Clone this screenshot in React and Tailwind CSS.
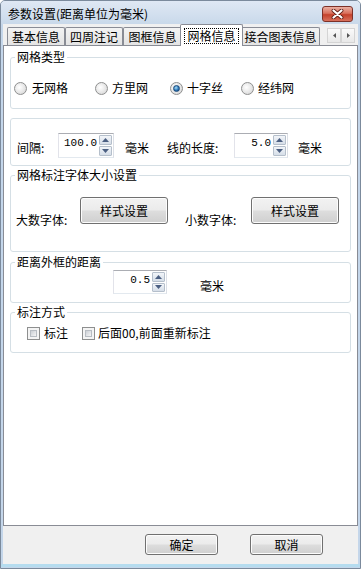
import React from "react";

const tabs = ["基本信息", "四周注记", "图框信息", "网格信息", "接合图表信息"];

function Tab({ label, active, w }) {
  if (active) {
    return (
      <div
        className={`relative z-10 ${w} h-[22px] -mx-[2px] -mb-px flex items-start justify-center pt-[3px] bg-white border border-b-0 border-[#898c95] rounded-t-[2px]`}
      >
        <span className="px-[2px] leading-[14px] border border-dotted border-black">{label}</span>
      </div>
    );
  }
  return (
    <div
      className={`${w} h-[18px] flex items-center justify-center bg-[linear-gradient(#f3f3f3,#e4e4e4)] border border-b-0 border-[#898c95] rounded-t-[2px]`}
    >
      <span className="leading-[14px]">{label}</span>
    </div>
  );
}

function Radio({ checked }) {
  return (
    <div className="w-[13px] h-[13px] rounded-full border border-[#8e8f8f] bg-[radial-gradient(circle_at_40%_40%,#ffffff,#e4e4e4_60%,#c9c9c9)] flex items-center justify-center shrink-0">
      {checked && (
        <div className="w-[7px] h-[7px] rounded-full bg-[radial-gradient(circle_at_40%_35%,#a8e0fa,#2d77b8_55%,#0e3c6e)] border border-[#1b4a7a]" />
      )}
    </div>
  );
}

function Check() {
  return (
    <div className="w-[13px] h-[13px] border border-[#8e8f8f] bg-[#f4f4f4] p-[2px] shrink-0">
      <div className="w-full h-full border border-[#b8bdc3] bg-[linear-gradient(135deg,#cbcfd5,#f5f5f5)]" />
    </div>
  );
}

function SpinBox({ value, w, h }) {
  return (
    <div className={`flex ${w} ${h} border border-[#abadb3] border-l-[#e2e3ea] border-r-[#dbdfe6] border-b-[#e3e9ef] bg-white shrink-0`}>
      <div className="flex-1 text-right pr-[2px] pt-[2px] font-['Liberation_Mono',monospace] text-[11px] leading-[14px] text-black">
        {value}
      </div>
      <div className="flex flex-col w-[13px] my-[1px] mr-[1px] gap-[1px]">
        <div className="flex-1 flex items-center justify-center border border-[#b5bfcb] bg-[linear-gradient(#f2f5f9,#d6dee8)] rounded-[1px]">
          <svg width="7" height="4" viewBox="0 0 7 4">
            <path d="M0 4 L3.5 0 L7 4Z" fill="#4b5f82" />
          </svg>
        </div>
        <div className="flex-1 flex items-center justify-center border border-[#b5bfcb] bg-[linear-gradient(#f2f5f9,#d6dee8)] rounded-[1px]">
          <svg width="7" height="4" viewBox="0 0 7 4">
            <path d="M0 0 L3.5 4 L7 0Z" fill="#4b5f82" />
          </svg>
        </div>
      </div>
    </div>
  );
}

function PushButton({ label, w, h }) {
  return (
    <div
      className={`${w} ${h} flex items-center justify-center rounded-[3px] border border-[#707070] bg-[linear-gradient(#f2f2f2_0%,#ebebeb_48%,#dddddd_52%,#cfcfcf_100%)] shadow-[inset_0_0_0_1px_#fcfcfc]`}
    >
      <span className="leading-[14px]">{label}</span>
    </div>
  );
}

function Group({ title, className, children }) {
  return (
    <fieldset className={`mx-[6px] border border-[#d5dfe5] rounded-[3px] ${className}`}>
      <legend className="ml-[4px] px-[2px] leading-[14px]">{title}</legend>
      {children}
    </fieldset>
  );
}

export default function App() {
  return (
    <div className="w-[361px] h-[569px] flex flex-col bg-[#c4d6ea] border border-[#7b8a9c] rounded-t-[5px] overflow-hidden text-[12px] text-black font-['Noto_Sans_CJK_SC','Noto_Sans',sans-serif]">
      {/* title bar */}
      <div className="h-[23px] flex items-center pl-[7px] pr-[7px] bg-[linear-gradient(#dfe8f4,#c9d9ea)]">
        <span className="leading-[14px] pt-[2px]">参数设置(距离单位为毫米)</span>
        <div className="ml-auto mt-[2px] w-[31px] h-[16px] rounded-[3px] border border-[#7d3128] bg-[linear-gradient(#eab0a3_0%,#d9705c_45%,#c4412b_55%,#d8705c_100%)] flex items-center justify-center">
          <svg width="13" height="10" viewBox="0 0 13 10">
            <path d="M2.5 1.5 L10.5 8.5 M10.5 1.5 L2.5 8.5" stroke="#5e1d15" strokeWidth="3.8" strokeLinecap="round" />
            <path d="M2.5 1.5 L10.5 8.5 M10.5 1.5 L2.5 8.5" stroke="#ffffff" strokeWidth="2.2" strokeLinecap="round" />
          </svg>
        </div>
      </div>

      {/* client area */}
      <div className="mx-[2px] h-[540px] flex flex-col bg-[#f0f0f0]">
        {/* tab strip */}
        <div className="h-[21px] flex items-end pl-[4px]">
          <Tab label={tabs[0]} w="w-[58px]" />
          <Tab label={tabs[1]} w="w-[58px]" />
          <Tab label={tabs[2]} w="w-[59px]" />
          <Tab label={tabs[3]} w="w-[63px]" active />
          <Tab label={tabs[4]} w="w-[79px]" />
          <div className="ml-auto mr-[3px] mb-[2px] flex gap-0">
            <div className="w-[14px] h-[15px] flex items-center justify-center border border-[#d4d4d4] bg-[linear-gradient(#fafafa,#e8e8e8)]">
              <svg width="3" height="5" viewBox="0 0 3 5">
                <path d="M3 0 L0 2.5 L3 5Z" fill="#555" />
              </svg>
            </div>
            <div className="w-[14px] h-[15px] flex items-center justify-center border border-[#d4d4d4] bg-[linear-gradient(#fafafa,#e8e8e8)]">
              <svg width="3" height="5" viewBox="0 0 3 5">
                <path d="M0 0 L3 2.5 L0 5Z" fill="#555" />
              </svg>
            </div>
          </div>
        </div>

        {/* tab panel */}
        <div className="h-[481px] border border-[#898c95] bg-white flex flex-col">
          <Group title="网格类型" className="mt-[4px] pt-[17px] pb-[13px]">
            <div className="flex items-center pl-[3px]">
              <div className="w-[81px] flex items-center gap-[5px]">
                <Radio />
                <span className="leading-[14px]">无网格</span>
              </div>
              <div className="w-[75px] flex items-center gap-[4px]">
                <Radio />
                <span className="leading-[14px]">方里网</span>
              </div>
              <div className="w-[71px] flex items-center gap-[4px]">
                <Radio checked />
                <span className="leading-[14px]">十字丝</span>
              </div>
              <div className="flex items-center gap-[4px]">
                <Radio />
                <span className="leading-[14px]">经纬网</span>
              </div>
            </div>
          </Group>

          <div className="mx-[6px] mt-[9px] border border-[#d5dfe5] rounded-[3px] pt-[14px] pb-[7px] pl-[6px] flex items-start">
            <span className="w-[41px] mt-[8px] leading-[14px]">间隔:</span>
            <SpinBox value="100.0" w="w-[56px]" h="h-[25px]" />
            <span className="ml-[11px] mt-[8px] leading-[14px]">毫米</span>
            <span className="ml-[18px] w-[67px] mt-[8px] leading-[14px]">线的长度:</span>
            <SpinBox value="5.0" w="w-[54px]" h="h-[25px]" />
            <span className="ml-[10px] mt-[8px] leading-[14px]">毫米</span>
          </div>

          <Group title="网格标注字体大小设置" className="mt-[2px] pt-[15px] pb-[24px]">
            <div className="flex items-start pl-[5px]">
              <span className="w-[64px] mt-[16px] leading-[14px]">大数字体:</span>
              <PushButton label="样式设置" w="w-[88px]" h="h-[27px]" />
              <span className="ml-[17px] w-[66px] mt-[16px] leading-[14px]">小数字体:</span>
              <PushButton label="样式设置" w="w-[88px]" h="h-[27px]" />
            </div>
          </Group>

          <Group title="距离外框的距离" className="mt-[3px] pt-[1px] pb-[8px]">
            <div className="flex items-start pl-[102px]">
              <SpinBox value="0.5" w="w-[54px]" h="h-[24px]" />
              <span className="ml-[33px] mt-[9px] leading-[14px]">毫米</span>
            </div>
          </Group>

          <Group title="标注方式" className="mt-[2px] pt-[7px] pb-[12px]">
            <div className="flex items-center pl-[16px]">
              <Check />
              <span className="ml-[4px] leading-[14px]">标注</span>
              <div className="ml-[14px]">
                <Check />
              </div>
              <span className="ml-[3px] leading-[14px]">后面00,前面重新标注</span>
            </div>
          </Group>
        </div>

        {/* bottom buttons */}
        <div className="flex-1 flex items-start justify-end pt-[8px] pr-[35px] gap-[32px]">
          <PushButton label="确定" w="w-[73px]" h="h-[21px]" />
          <PushButton label="取消" w="w-[73px]" h="h-[21px]" />
        </div>
      </div>
      <div className="h-[3px] mx-[0px] bg-[#b5dcef]" />
    </div>
  );
}
